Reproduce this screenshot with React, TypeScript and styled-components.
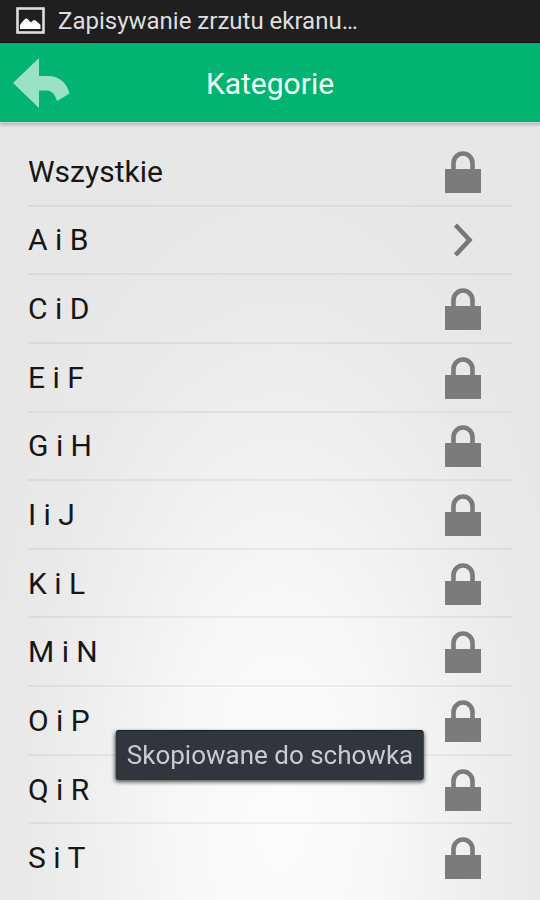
import React from 'react';
import styled, { createGlobalStyle } from 'styled-components';

const GlobalStyle = createGlobalStyle`
  *, *::before, *::after { box-sizing: border-box; }
  body {
    margin: 0;
    font-family: Roboto, 'Noto Sans', sans-serif;
    color: #161616;
    background: #e6e6e6;
  }
`;

const Screen = styled.div`
  display: flex;
  flex-direction: column;
  min-height: 100vh;
  background: radial-gradient(ellipse 62% 76% at 52% 90%, #fcfcfc 0%, #f8f8f8 30%, #efefef 56%, #e9e9e9 78%, #e7e7e7 100%);
`;

const StatusBar = styled.div`
  display: flex;
  align-items: center;
  gap: 12px;
  height: 43px;
  padding: 0 16px;
  background: #1f1f1f;
  border-bottom: 1px solid #111;
  color: #dedede;
  font-size: 24px;
  line-height: 32px;
`;

const Header = styled.header`
  display: grid;
  grid-template-columns: 72px 1fr 72px;
  align-items: center;
  height: 79px;
  background: #03b371;
  box-shadow: 0 1px 1px #c9d5d0, 0 3px 3px #b4b4b4;
`;

const BackButton = styled.button`
  display: flex;
  padding: 0 0 0 12px;
  border: 0;
  background: none;
  cursor: pointer;
`;

const Title = styled.h1`
  margin: 0;
  padding-top: 2px;
  color: #effff5;
  font-size: 30px;
  line-height: 40px;
  font-weight: 400;
  text-align: center;
`;

const CategoryList = styled.ul`
  flex: 1;
  display: flex;
  flex-direction: column;
  margin: 0;
  padding: 16px 28px 7px;
  list-style: none;
`;

const CategoryItem = styled.li`
  flex: 1 1 64px;
  display: flex;
  min-height: 64px;
  border-bottom: 2px solid rgba(0, 0, 0, 0.05);

  &:last-child { border-bottom-color: transparent; }
`;

const CategoryButton = styled.button`
  flex: 1;
  display: flex;
  align-items: center;
  justify-content: space-between;
  padding: 1px 31px 0 0;
  border: 0;
  background: none;
  color: inherit;
  font: inherit;
  font-size: 30px;
  line-height: 36px;
  text-align: left;
  cursor: pointer;
`;

const Toast = styled.div`
  position: fixed;
  left: 50%;
  bottom: 120px;
  transform: translateX(-50%);
  padding: 8px 11px;
  border-radius: 3px;
  border-top: 1px solid #122329;
  background: #30363c;
  box-shadow: 0 2px 4px rgba(0, 0, 0, 0.7);
  color: #c9cccf;
  font-size: 26px;
  line-height: 33px;
  white-space: nowrap;
`;

const PictureIcon = () => (
  <svg width="30" height="28" viewBox="0 0 30 28" aria-hidden="true">
    <rect x="1.5" y="1.5" width="26" height="24" fill="#1f1f1f" stroke="#dedede" strokeWidth="2.6" />
    <path d="M4 22v-4l3-4 2-2q1.500-1 3 .5l3 3 2-2q1.500-1 2.500 0l3 2.500 2 2V22z" fill="#fff" />
  </svg>
);

const BackIcon = () => (
  <svg width="58" height="52" viewBox="0 0 58 52" aria-hidden="true">
    <path d="M1 26 27 1v18h9c11 0 19 7 21.500 17.500L45 44c-2-7-5-10-10.500-10.500H27V51z" fill="#99e2c6" />
  </svg>
);

const LockIcon = () => (
  <svg width="36" height="42" viewBox="0 0 36 42" aria-hidden="true">
    <path d="M8.500 20V12a9.500 9.500 0 0 1 19 0v8" fill="none" stroke="#7b7b7b" strokeWidth="4.600" />
    <rect y="18" width="36" height="24" fill="#7b7b7b" />
  </svg>
);

const ArrowIcon = () => (
  <svg width="36" height="34" viewBox="0 0 36 34" aria-hidden="true">
    <path d="m10.500 2 14 15-14 15" fill="none" stroke="#777" strokeWidth="4.600" />
  </svg>
);

const categories = [
  { name: 'Wszystkie', locked: true },
  { name: 'A i B', locked: false },
  { name: 'C i D', locked: true },
  { name: 'E i F', locked: true },
  { name: 'G i H', locked: true },
  { name: 'I i J', locked: true },
  { name: 'K i L', locked: true },
  { name: 'M i N', locked: true },
  { name: 'O i P', locked: true },
  { name: 'Q i R', locked: true },
  { name: 'S i T', locked: true },
];

export default function App() {
  return (
    <>
      <GlobalStyle />
      <Screen>
        <StatusBar>
          <PictureIcon />
          <span>Zapisywanie zrzutu ekranu…</span>
        </StatusBar>
        <Header>
          <BackButton type="button" aria-label="Wstecz">
            <BackIcon />
          </BackButton>
          <Title>Kategorie</Title>
        </Header>
        <CategoryList>
          {categories.map(({ name, locked }) => (
            <CategoryItem key={name}>
              <CategoryButton type="button">
                <span>{name}</span>
                {locked ? <LockIcon /> : <ArrowIcon />}
              </CategoryButton>
            </CategoryItem>
          ))}
        </CategoryList>
        <Toast role="status">Skopiowane do schowka</Toast>
      </Screen>
    </>
  );
}
